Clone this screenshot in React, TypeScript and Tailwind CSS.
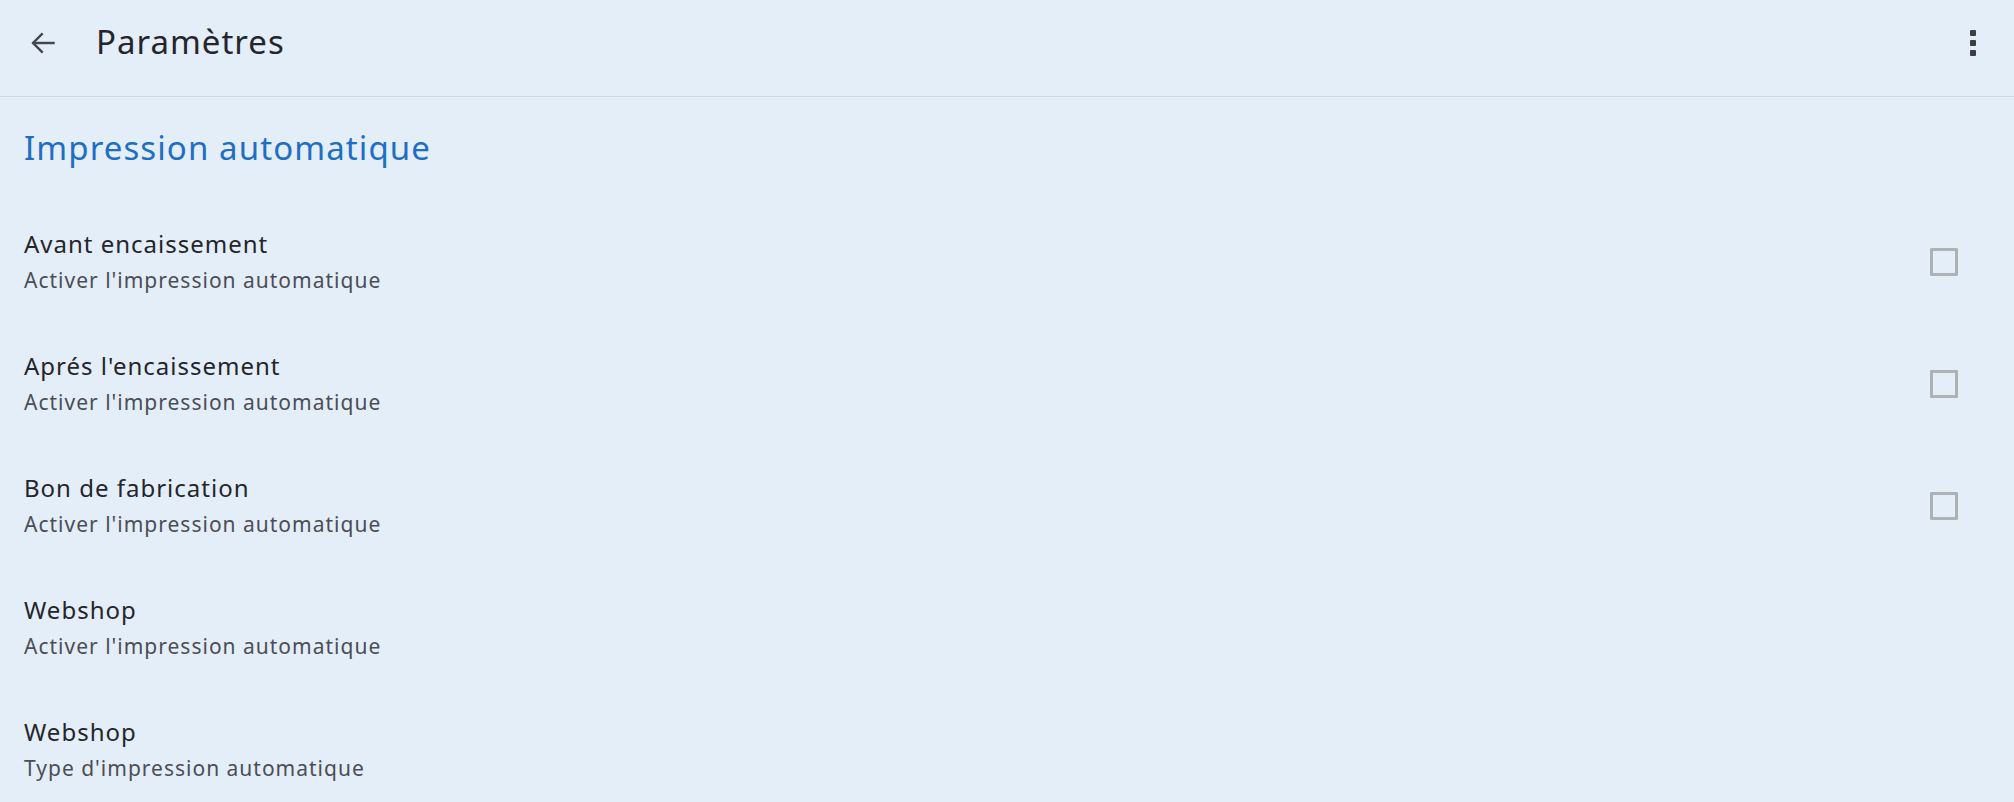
import React from "react";

const rows = [
  { title: "Avant encaissement", sub: "Activer l'impression automatique", check: true },
  { title: "Aprés l'encaissement", sub: "Activer l'impression automatique", check: true },
  { title: "Bon de fabrication", sub: "Activer l'impression automatique", check: true },
  { title: "Webshop", sub: "Activer l'impression automatique", check: false },
  { title: "Webshop", sub: "Type d'impression automatique", check: false },
];

export default function App() {
  return (
    <div
      className="w-[2014px] h-[802px] overflow-hidden bg-[#e3eef8]"
      style={{ fontFamily: '"Noto Sans", "Open Sans", sans-serif' }}
    >
      <div className="h-[97px] border-b border-[#cfd8e0]">
        <div className="h-[86px] flex items-center">
          <div className="w-[96px] flex items-center pl-[29px]">
            <svg width="28" height="28" viewBox="0 0 24 24" fill="none" stroke="#45454d" strokeWidth="2.1" strokeLinecap="square">
              <path d="M21 12H4" />
              <path d="M11 4.5L3.5 12l7.5 7.5" />
            </svg>
          </div>
          <div className="text-[33px] leading-[40px] tracking-[1px] text-[#25252b] -mt-[2px]">Paramètres</div>
          <div className="ml-auto mr-[38px] flex flex-col gap-[4px]">
            <span className="w-[6px] h-[6px] bg-[#3d3d45] rounded-[1px]" />
            <span className="w-[6px] h-[6px] bg-[#3d3d45] rounded-[1px]" />
            <span className="w-[6px] h-[6px] bg-[#3d3d45] rounded-[1px]" />
          </div>
        </div>
      </div>
      <div className="h-[103px] pl-[24px] pt-[29px]">
        <div className="text-[33px] leading-[44px] tracking-[1.1px] text-[#1e6fc3]">Impression automatique</div>
      </div>
      {rows.map((r, i) => (
        <div key={i} className="h-[122px] flex items-start pl-[24px] pr-[56px]">
          <div className="flex flex-col pt-[29px]">
            <div className="text-[24px] leading-[30px] tracking-[1px] text-[#25252b]">{r.title}</div>
            <div className="text-[21px] leading-[28px] tracking-[1px] mt-[7px] text-[#4d4d55]">{r.sub}</div>
          </div>
          {r.check && (
            <div className="ml-auto mt-[48px] w-[28px] h-[28px] border-[3px] border-[#adb2b6] rounded-[1px]" />
          )}
        </div>
      ))}
    </div>
  );
}
